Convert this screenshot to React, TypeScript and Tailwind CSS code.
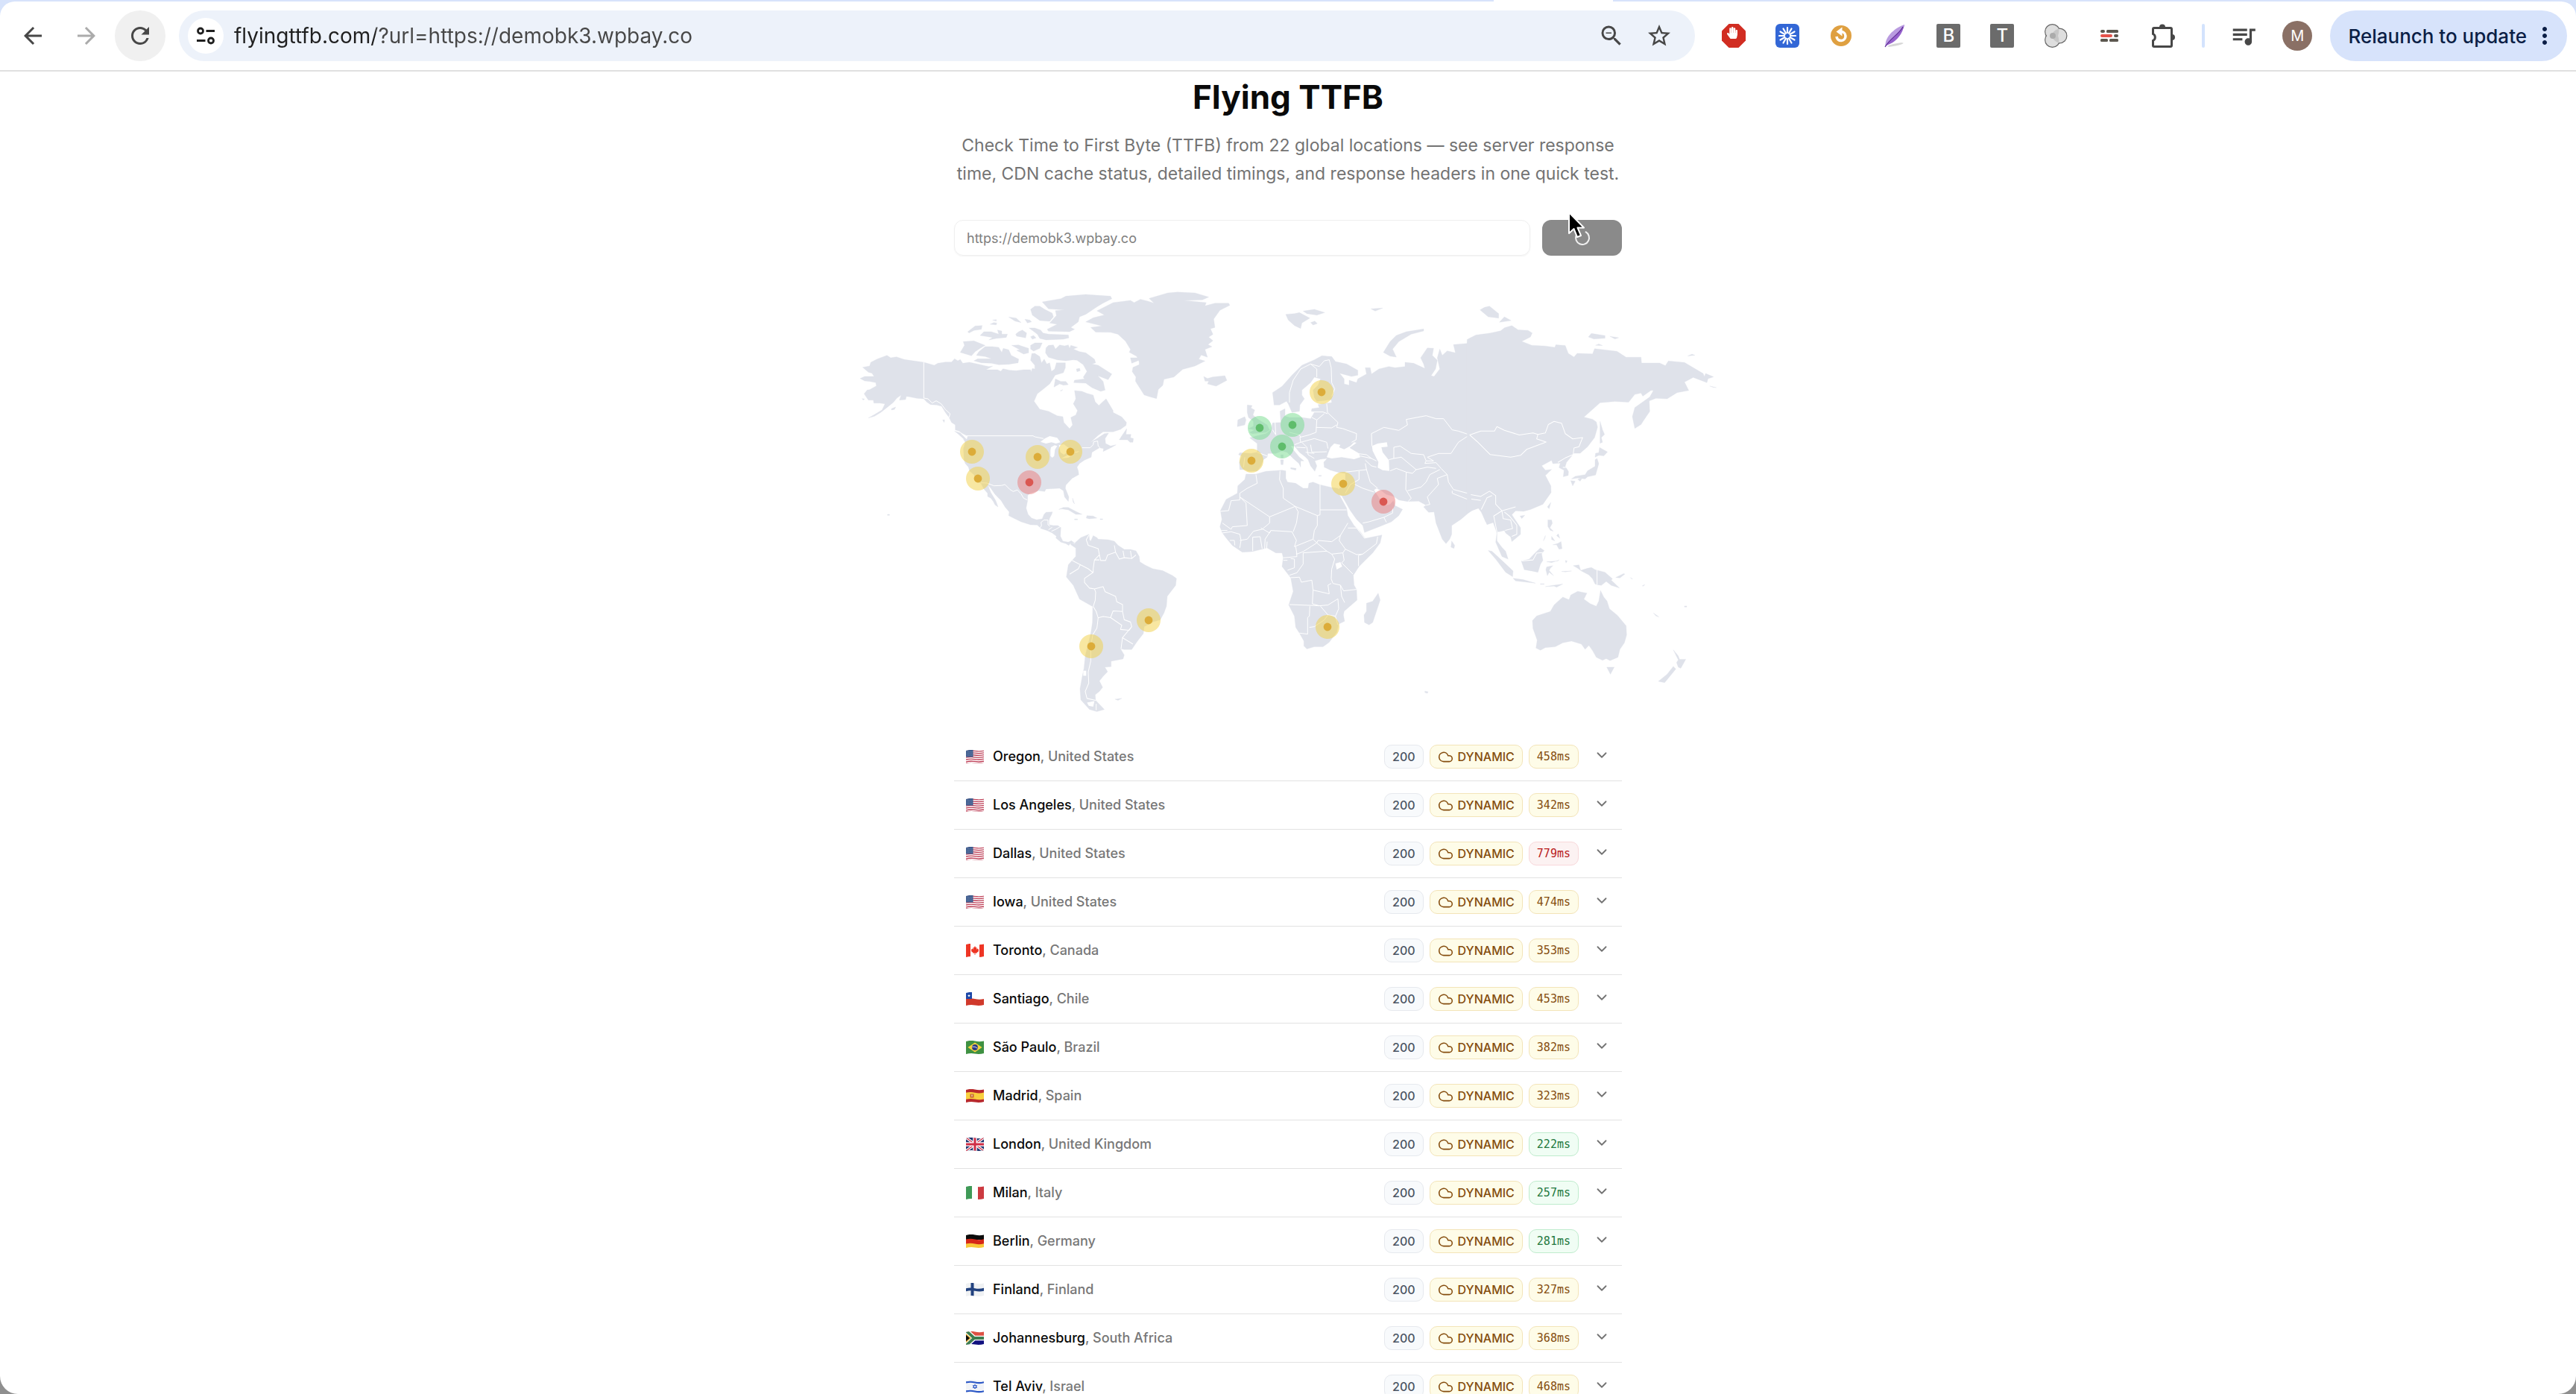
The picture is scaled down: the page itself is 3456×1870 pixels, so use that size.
import type { ReactNode } from "react";
import { ChevronDown, Cloud } from "lucide-react";
import { FaHandPaper } from "react-icons/fa";
import {
  MdArrowBack,
  MdArrowForward,
  MdMoreVert,
  MdQueueMusic,
  MdRefresh,
  MdStarBorder,
  MdZoomOut,
} from "react-icons/md";

type Speed = "good" | "ok" | "slow";

const results: {
  flag: string;
  city: string;
  country: string;
  ttfb: number;
}[] = [
  { flag: "us", city: "Oregon", country: "United States", ttfb: 458 },
  { flag: "us", city: "Los Angeles", country: "United States", ttfb: 342 },
  { flag: "us", city: "Dallas", country: "United States", ttfb: 779 },
  { flag: "us", city: "Iowa", country: "United States", ttfb: 474 },
  { flag: "ca", city: "Toronto", country: "Canada", ttfb: 353 },
  { flag: "cl", city: "Santiago", country: "Chile", ttfb: 453 },
  { flag: "br", city: "São Paulo", country: "Brazil", ttfb: 382 },
  { flag: "es", city: "Madrid", country: "Spain", ttfb: 323 },
  { flag: "gb", city: "London", country: "United Kingdom", ttfb: 222 },
  { flag: "it", city: "Milan", country: "Italy", ttfb: 257 },
  { flag: "de", city: "Berlin", country: "Germany", ttfb: 281 },
  { flag: "fi", city: "Finland", country: "Finland", ttfb: 327 },
  { flag: "za", city: "Johannesburg", country: "South Africa", ttfb: 368 },
  { flag: "il", city: "Tel Aviv", country: "Israel", ttfb: 468 },
];

const speedOf = (ttfb: number): Speed =>
  ttfb < 300 ? "good" : ttfb < 600 ? "ok" : "slow";

const badgeStyles: Record<Speed, string> = {
  good: "border-[#bfeccd] bg-[#f0fdf4] text-[#24793f]",
  ok: "border-[#f3e4b8] bg-[#fefce8] text-[#854d0e]",
  slow: "border-[#f8d8da] bg-[#fcf2f2] text-[#b91c1c]",
};

const markerColors: Record<Speed, { ring: string; dot: string }> = {
  good: { ring: "#73db8b", dot: "#5fbd6b" },
  ok: { ring: "#f1cf43", dot: "#dcac39" },
  slow: { ring: "#e97979", dot: "#da5751" },
};

const markers: { x: number; y: number; speed: Speed }[] = [
  { x: 1304, y: 606, speed: "ok" },
  { x: 1312, y: 642, speed: "ok" },
  { x: 1381, y: 647, speed: "slow" },
  { x: 1392, y: 613, speed: "ok" },
  { x: 1436, y: 606, speed: "ok" },
  { x: 1464, y: 867, speed: "ok" },
  { x: 1541, y: 832, speed: "ok" },
  { x: 1679, y: 618, speed: "ok" },
  { x: 1690, y: 574, speed: "good" },
  { x: 1720, y: 599, speed: "good" },
  { x: 1734, y: 570, speed: "good" },
  { x: 1773, y: 526, speed: "ok" },
  { x: 1781, y: 841, speed: "ok" },
  { x: 1802, y: 649, speed: "ok" },
  { x: 1856, y: 673, speed: "slow" },
];

// Each part of the world has its own grid, placed by its transform.
const regions: {
  name: string;
  transform: string;
  land: string[];
  water: string;
  borders: string;
}[] = [
  {
    name: "north-america",
    transform: "translate(1140 380) scale(0.3333)",
    land: [
      "M298,318 L340,330 355,322 385,317 410,317 422,304 435,312 445,307 455,322 482,318 520,326 545,332 560,335 575,334 548,348 595,348 608,354 617,344 645,350 670,352 700,348 728,348 730,357 735,343 745,345 745,330 738,322 728,310 733,283 745,282 765,295 772,320 783,305 793,325 805,320 812,355 825,345 832,320 868,320 868,340 860,360 827,370 805,405 780,425 755,445 742,475 765,507 800,515 835,533 858,537 862,560 885,585 897,570 890,540 910,530 917,512 900,485 910,465 905,432 935,435 955,443 980,450 988,477 1003,492 1015,480 1032,465 1060,512 1060,520 1095,538 1114,560 1112,572 1090,588 1060,598 1020,598 1000,612 970,640 1000,622 1025,605 1042,603 1028,625 1030,645 1050,655 1072,650 1055,660 1020,677 1022,665 1005,662 975,680 972,700 945,712 925,725 915,740 920,755 922,770 895,785 870,812 868,825 882,860 880,878 865,860 860,835 845,825 790,828 785,838 760,835 725,845 716,855 716,875 710,905 718,930 732,945 752,952 775,948 782,930 790,922 816,920 813,930 805,945 802,955 802,972 820,975 838,975 850,983 848,1018 858,1038 880,1042 892,1036 906,1046 890,1044 882,1055 870,1048 850,1042 830,1025 832,1018 815,1005 795,995 770,987 755,973 728,972 690,960 655,943 640,935 642,920 625,900 610,875 585,850 568,825 556,812 568,842 588,875 597,900 585,892 578,878 568,865 555,858 555,845 540,828 528,805 516,800 500,770 482,755 478,740 465,725 460,710 458,665 465,640 458,628 472,628 475,615 455,605 440,595 425,590 425,570 410,560 400,540 385,520 370,495 350,490 325,488 310,478 298,465 270,463 240,457 228,455 225,468 200,470 207,450 190,462 175,480 150,500 125,520 100,535 75,542 100,528 130,510 142,485 120,482 97,482 95,470 75,470 58,445 70,430 80,428 107,413 105,400 82,395 60,393 42,383 60,375 98,375 90,362 75,358 52,338 80,333 85,318 110,305 150,290 165,300 188,296 220,307Z",
      "M1115,585 L1098,610 1085,630 1118,630 1128,640 1140,640 1142,625 1130,622 1132,608 1112,608Z",
      "M422,595 L445,602 470,628 460,628 435,605Z M374,550 L382,550 380,560Z M168,505 L185,498 180,508 168,510Z M50,464 L60,466 54,470Z M152,930 h8 v4 h-8Z",
      "M457,235 L500,232 545,250 525,262 505,275 490,292 478,288 445,278 462,250Z",
      "M545,255 L575,255 600,258 612,278 618,262 640,268 650,290 680,305 678,320 640,326 600,328 570,322 530,320 500,312 515,304 572,304 545,295 510,290 520,275Z",
      "M525,210 L540,195 570,195 600,205 595,188 612,192 612,205 635,205 630,218 590,222 560,228 575,218Z M475,195 L505,172 533,170 530,185 500,190 480,200Z",
      "M565,165 L580,158 592,160 590,167Z M575,148 L590,146 590,152Z M640,136 L670,140 690,158 665,152Z M705,145 L725,148 732,155 715,160Z",
      "M668,205 L680,195 695,188 712,200 708,220 685,215 672,213Z M728,215 L740,210 750,220 735,225Z M722,180 L745,180 768,188 778,200 800,205 880,208 882,220 860,225 790,228 765,222 755,205Z",
      "M728,250 L745,240 775,240 765,262 740,273 728,265Z M652,250 L680,248 690,252 720,262 720,280 700,285 672,270 685,268Z",
      "M775,75 L850,62 870,52 950,45 1050,52 1055,62 1030,75 1000,90 1015,82 980,105 950,125 925,135 920,155 890,178 905,185 885,195 800,193 795,185 835,165 805,160 832,130 828,110 865,107 800,103Z",
      "M728,105 L745,92 765,92 785,105 815,120 820,135 805,153 765,150 735,128Z",
      "M790,260 L800,250 820,248 828,265 845,248 865,252 880,248 885,262 890,250 917,258 900,265 925,275 950,280 985,305 990,320 975,325 1000,330 1055,365 1040,388 998,372 1020,395 1028,430 1010,435 975,420 950,402 902,400 905,390 945,385 940,378 955,355 940,328 915,310 900,308 870,312 835,308 800,298 788,280Z",
      "M828,385 L850,395 870,395 880,408 860,410 845,405 822,418Z M848,432 L858,428 850,434Z M912,345 L925,342 928,352 915,356Z",
      "M842,910 L860,902 880,902 910,918 935,930 910,930 880,912 855,908Z M955,935 L980,937 995,945 965,948 952,945Z M905,949 h12 v3 h-12Z M1008,948 h10 v3 h-10Z M897,865 L905,888 899,880Z",
    ],
    water:
      "M768,638 L785,625 805,615 835,622 848,640 830,645 812,640 790,645Z M810,660 L825,652 835,655 826,670 823,695 815,702 808,695 808,672Z M842,652 L862,648 885,665 875,680 862,690 848,680Z M850,705 L885,688 900,690 880,702Z M898,680 L925,675 915,682Z",
    borders:
      "M298,318 V462 L315,465 332,482 348,473 368,485 385,508 404,525 400,540 M470,614 H738 L745,618 780,625 M935,662 L968,662 980,650 982,638 998,635 1000,655 1008,662 M528,803 L552,804 580,815 610,814 625,810 645,830 658,838 675,832 690,848 700,865 715,872 M766,985 L772,975 770,962 782,953 798,953 798,972 806,978 M800,992 L815,982 M812,998 L830,990 850,978",
  },
  {
    name: "south-america-greenland",
    transform: "translate(1400 380) scale(0.3333 0.37)",
    land: [
      "M170,140 L200,125 245,115 215,100 280,70 350,62 365,70 390,58 420,65 445,72 425,55 500,35 540,32 610,35 665,50 640,60 565,62 655,70 650,82 690,72 745,72 750,80 710,98 685,130 690,160 672,165 682,185 665,195 682,208 662,222 678,230 650,240 660,268 635,260 625,275 650,282 610,300 560,312 525,340 485,348 480,370 462,385 455,418 430,412 405,405 370,355 372,340 357,320 360,305 385,295 385,285 375,265 345,250 350,240 330,210 300,185 270,178 210,177 190,160 235,155Z",
      "M350,270 L380,270 382,280 355,290Z M645,338 L660,345 680,340 730,335 738,352 695,373 660,365 665,355 650,355Z",
      "M128,940 L150,922 183,910 185,930 190,935 200,915 215,922 220,928 260,930 285,935 300,950 325,965 350,965 372,970 385,990 388,1010 410,1022 440,1035 480,1042 520,1060 535,1070 532,1095 498,1135 495,1170 485,1195 470,1220 440,1228 405,1245 402,1270 380,1295 355,1328 325,1328 310,1325 325,1348 320,1362 272,1370 272,1390 247,1392 258,1408 240,1425 225,1442 238,1465 225,1480 208,1492 210,1512 245,1545 215,1553 185,1545 160,1520 150,1510 147,1470 155,1430 163,1395 168,1350 190,1270 197,1230 198,1172 145,1145 120,1095 92,1065 100,1020 130,990 130,960 110,948 108,938 125,945Z",
      "M288,1508 L315,1505 300,1512Z",
    ],
    water: "M175,1520 L205,1515 200,1535 182,1532Z M160,1405 h12 v18 h-12Z",
    borders:
      "M183,912 L172,930 180,950 220,962 225,985 205,1003 200,1035 200,1048 165,1070 165,1085 185,1105 205,1108 210,1120 208,1150 200,1172 M115,1005 L148,1020 140,1035 105,1055 M148,1020 L180,1035 198,1048 M225,985 L230,1005 250,1005 258,985 290,975 285,950 M290,975 L305,1000 325,995 320,970 M325,995 L355,998 350,970 M355,998 L372,985 M205,1003 L225,1003 M205,1108 L240,1100 248,1118 290,1135 295,1155 318,1165 318,1190 M200,1172 L212,1190 220,1213 240,1208 270,1212 280,1188 318,1190 325,1220 350,1228 355,1245 345,1258 310,1255 315,1240 270,1212 M220,1213 L215,1250 198,1275 190,1320 190,1370 180,1410 182,1450 168,1480 175,1505 210,1512 M212,1525 V1548 M355,1245 L318,1285 360,1308 M318,1285 L312,1325",
  },
  {
    name: "europe-africa",
    transform: "translate(1620 380) scale(0.3333)",
    land: [
      "M262,440 L300,415 340,370 380,330 430,308 460,292 500,295 515,315 560,325 605,350 605,370 580,375 532,362 550,385 550,405 570,410 570,390 600,400 605,385 640,365 635,340 655,340 660,365 690,345 730,335 755,340 795,335 795,318 830,322 875,343 870,325 858,300 885,260 910,262 905,290 925,310 918,345 900,372 912,375 935,345 925,300 935,265 945,290 965,272 998,280 990,247 1045,242 1050,225 1080,210 1120,205 V960 L1103,915 1095,885 1090,905 1065,915 1050,925 1020,950 983,975 983,1010 975,1030 960,1048 945,1030 920,965 912,920 890,922 870,900 880,893 850,877 805,878 770,872 750,858 720,850 700,835 680,825 670,832 685,855 700,880 715,895 735,890 748,875 755,895 785,910 770,935 740,960 690,980 632,1003 625,975 600,950 575,915 555,880 540,855 530,850 525,830 545,815 555,790 555,765 530,762 495,752 470,740 468,720 482,705 455,708 432,715 440,735 432,757 415,735 405,710 395,700 370,680 350,655 335,655 345,670 370,700 388,715 375,715 375,740 368,725 345,705 320,680 300,675 275,685 243,685 240,700 225,710 215,735 200,755 165,757 150,750 130,750 128,720 138,695 125,690 130,682 175,685 200,680 200,645 170,622 195,615 235,605 255,590 262,562 295,560 292,515 312,505 312,535 330,540 380,540 415,545 430,520 418,515 420,505 450,500 445,488 500,480 498,468 470,472 440,475 430,460 425,430 445,410 455,385 430,378 415,400 380,430 380,450 390,465 372,490 370,515 340,520 325,485 318,475 290,490 268,490Z",
      "M155,768 L195,768 235,757 300,752 315,755 315,785 322,800 355,805 385,825 405,825 408,805 425,800 450,810 500,822 525,825 530,850 560,905 565,935 590,975 615,1000 635,1027 702,1013 695,1045 665,1085 610,1140 587,1175 590,1215 600,1232 602,1275 550,1320 547,1335 552,1360 528,1372 520,1405 490,1445 465,1463 430,1463 400,1472 388,1460 388,1440 370,1408 355,1385 350,1340 327,1295 345,1240 335,1185 300,1140 305,1105 300,1085 275,1085 240,1065 200,1075 180,1080 140,1082 100,1055 75,1025 60,1005 50,980 58,950 52,915 75,870 120,845 122,815 150,790Z",
      "M160,490 L180,492 175,502 190,510 183,530 200,545 240,570 250,590 235,600 180,605 170,600 190,590 165,585 185,575 185,555 165,540 160,520Z M122,550 L150,537 155,550 150,570 120,577Z",
      "M295,690 h10 v13 h-9Z M294,710 L306,710 304,730 296,730Z M335,742 L357,745 355,752 335,747Z M448,773 h10 v3 h-10Z",
      "M315,125 L350,122 370,118 412,140 380,160 375,182 350,170 325,148Z M385,112 L430,105 472,118 440,128 400,122Z M415,158 L432,152 442,162 425,168Z M658,103 L705,100 675,112Z",
      "M870,184 L870,192 820,205 770,235 745,265 760,297 735,293 708,278 735,235 760,210 800,195Z M1097,107 L1115,97 1135,92 1172,122 1172,140 1130,135Z M1175,157 L1195,135 1222,150Z",
      "M687,1247 L695,1275 665,1365 650,1375 632,1365 630,1335 640,1320 640,1288 665,1280Z M983,1037 L995,1055 992,1067 980,1062Z",
    ],
    water:
      "M480,700 L495,660 510,645 535,650 530,660 550,668 575,655 590,640 600,642 572,662 610,685 615,700 590,708 540,700 500,705Z M662,655 L685,645 722,640 725,658 700,660 705,680 730,712 732,755 705,752 685,742 688,720 665,675Z M515,1128 L535,1122 542,1140 520,1152Z",
    borders:
      "M195,770 L200,805 160,825 130,845 130,860 250,940 353,898 305,865 305,825 290,790 292,755 M52,918 L85,915 95,875 130,872 130,860 M130,860 L155,885 160,975 100,980 M250,940 L250,965 220,990 185,998 160,1030 M353,898 L442,935 V975 L430,995 425,1030 350,1060 358,1035 345,1010 340,1000 255,995 250,1005 215,985 M453,810 V912 H560 M453,912 V932 L442,935 M353,898 L365,920 358,965 345,1000 M100,980 L95,990 60,965 M55,995 H80 M60,1005 L95,1000 130,1010 135,1035 130,1065 M160,1030 L130,1035 M90,1035 L108,1035 110,1055 M182,1022 V1078 M182,1022 L212,1020 220,1068 M230,1068 L232,1030 255,995 M238,1068 L240,1040 M425,1030 L440,1045 385,1080 360,1090 355,1060 M305,1105 L360,1100 358,1085 M305,1115 H322 M440,1045 L445,1035 500,1040 535,1015 530,1035 555,1070 600,1092 625,1090 680,1048 685,1020 M565,965 L535,1015 M565,985 L600,985 620,1010 633,1027 M440,1045 L480,1078 385,1085 M480,1078 L500,1090 545,1085 555,1070 M545,1085 L550,1115 540,1125 585,1170 M625,1090 L608,1095 608,1138 M500,1090 L512,1110 500,1150 498,1190 505,1208 535,1215 548,1238 600,1232 M385,1085 L385,1130 360,1165 330,1175 M322,1155 L350,1145 350,1110 335,1108 M335,1185 L370,1183 378,1203 420,1195 425,1235 490,1250 485,1215 498,1208 M425,1235 L422,1290 450,1298 330,1293 M450,1298 L485,1295 525,1270 M535,1215 L540,1260 552,1285 M525,1270 L528,1310 515,1340 485,1335 455,1300 M412,1300 L410,1340 403,1345 403,1412 370,1408 M410,1385 L430,1382 470,1355 485,1335 M515,1340 L525,1375 M330,480 L330,440 345,390 375,345 415,325 440,345 440,378 M415,325 L450,335 470,312 490,308 498,340 500,400 512,425 500,455 M480,485 L483,520 525,560 520,580 545,585 600,605 598,630 580,640 M440,550 L437,600 410,610 372,620 M437,580 L500,582 520,570 M418,518 L465,518 483,525 M420,540 L440,550 470,525 M372,620 L375,640 430,625 480,640 485,665 M375,640 L350,650 M380,640 L400,660 405,690 430,705 M358,660 L395,662 M415,650 L420,680 480,678 M395,680 L430,685 M330,600 L370,610 375,620 M262,590 L275,610 272,560 M200,680 L240,695 M150,700 L145,740 M555,760 L640,750 635,725 M615,695 L660,705 680,715 M600,685 L640,690 660,705 M640,750 L655,800 685,825 M635,712 L660,735 680,740 M610,755 L610,790 575,810 555,845 M590,808 L625,825 670,840 M625,965 L650,960 710,942 745,925 745,905 M710,942 L720,962 M735,755 L760,745 800,760 798,830 820,865 808,878 M730,710 L750,705 V660 L775,655 820,685 870,690 M662,655 L660,605 710,580 770,592 805,570 800,548 880,533 920,545 950,545 985,590 1010,595 1055,610 M750,705 L780,700 840,750 825,765 800,760 M870,690 L880,715 910,715 885,700 930,685 980,685 M840,750 L885,740 920,745 M935,750 L895,770 880,800 860,820 805,835 M880,715 L875,725 920,722 940,745 965,770 970,800 990,830 1065,850 1100,860 1115,855 M965,770 L925,785 930,810 885,860 895,890 880,893 M985,835 L985,845 1060,875 1065,850 M1065,865 L1070,880 1065,905 M1065,868 L1098,870 M980,685 L1010,640 1055,610",
  },
  {
    name: "asia-oceania",
    transform: "translate(1900 380) scale(0.3333 0.3508)",
    land: [
      "M205,215 L240,198 300,190 340,182 355,170 385,162 410,178 450,180 467,190 460,205 425,222 465,237 520,240 558,245 562,235 600,238 612,268 635,282 648,268 710,270 718,250 808,260 845,283 905,283 907,305 980,305 1003,315 1015,297 1080,303 1155,345 1160,357 1165,345 1197,358 1175,365 1170,380 1115,360 1080,378 1097,410 1050,418 1010,442 965,440 938,450 940,490 915,525 905,540 880,555 870,510 880,475 940,435 955,410 945,410 912,432 905,420 880,425 855,455 800,452 740,457 675,512 710,520 725,530 730,550 718,590 690,625 660,650 635,650 605,685 600,700 613,720 612,735 592,740 595,715 575,705 580,688 550,690 545,677 505,698 520,715 545,712 520,735 542,775 543,800 510,845 460,865 432,872 400,870 385,885 420,935 420,960 385,988 380,970 360,955 355,945 335,950 325,950 325,985 345,1010 360,1025 370,1055 345,1045 320,990 325,955 310,915 285,923 262,875 250,860 220,868 205,880Z",
      "M418,890 L437,887 425,900Z M542,838 L535,862 528,855Z M740,528 L750,560 758,578 745,590 750,608 740,612 740,560Z M738,628 L770,645 755,660 735,658 720,665 722,650 735,648Z M728,670 L735,690 722,733 690,740 680,748 650,745 625,748 640,738 680,732 690,717 720,700 720,675Z M622,755 L640,757 630,775Z M650,750 L668,745 660,757Z",
      "M530,905 L545,905 548,918 538,935 552,948 540,945 530,930Z M572,958 L578,975 565,965Z M550,1000 L570,995 583,988 587,1015 575,1017 565,1000Z M545,968 L558,985 545,980Z M520,965 L512,985 518,975Z",
      "M290,1022 L305,1025 345,1060 390,1100 388,1122 360,1105 320,1055Z M390,1128 L430,1133 480,1147 400,1138Z M500,1149 h15 v2 h-15Z M520,1160 L550,1155 590,1150 565,1162 555,1158Z",
      "M423,1062 L455,1055 480,1030 500,1012 515,1022 505,1035 510,1060 500,1075 490,1105 465,1100 435,1095Z M525,1085 L550,1080 540,1090 535,1098 553,1118 535,1105 528,1118 522,1095Z M525,1065 L570,1062 575,1058 545,1068Z M600,1060 L608,1062 603,1070Z M585,1102 L625,1100 600,1104Z",
      "M632,1080 L655,1077 662,1098 690,1090 705,1087 720,1095 760,1105 790,1130 785,1135 818,1165 785,1155 765,1140 745,1155 730,1153 720,1150 710,1130 695,1115 665,1100 650,1090Z M803,1125 L835,1110 840,1112 820,1127Z M862,1125 L871,1130 868,1131Z M910,1157 L920,1152 915,1158Z",
      "M468,1290 L485,1272 540,1255 555,1230 590,1200 615,1210 622,1192 650,1178 687,1185 675,1208 700,1225 725,1235 735,1215 742,1175 755,1200 768,1215 778,1245 810,1270 845,1310 847,1345 838,1375 820,1400 812,1430 780,1443 765,1435 750,1442 725,1430 710,1405 695,1385 680,1400 665,1380 625,1368 590,1375 560,1390 520,1393 500,1403 482,1395 487,1365 470,1320Z M767,1468 L797,1468 782,1495Z",
      "M1035,1402 L1055,1425 1060,1438 1085,1438 1065,1472 1055,1468 1048,1450 1055,1440Z M1035,1465 L1045,1475 1000,1527 975,1522 1010,1495Z M955,1261 L977,1276 965,1272Z M1080,1234 h9 v4 h-9Z",
      "M693,205 L705,192 760,200 760,210 715,213Z M780,203 L815,208 800,213Z M722,237 L735,232 750,238Z M1093,278 L1110,271 1122,275Z M1182,393 L1208,399 1195,398Z M35,1560 L48,1562 45,1568 35,1565Z",
    ],
    water: "",
    borders:
      "M215,580 L260,565 315,565 325,548 355,562 415,580 470,572 490,578 485,595 523,607 445,635 420,658 380,665 298,655 245,605 215,580 M490,578 L520,572 532,540 555,528 585,535 600,575 630,595 670,590 655,625 635,630 632,655 600,668 570,685 M590,704 H608 M220,808 L260,815 295,795 320,812 320,845 345,870 400,855 M345,870 L312,890 325,950 M345,870 L350,900 380,905 388,938 358,945 M355,875 L375,890 405,925 405,960 385,968 M262,865 L285,820 305,812 M222,825 L260,830 M425,1062 L470,1058 485,1032 510,1030 M728,1095 V1153",
  },
];

const WorldMap = () => (
  <svg
    viewBox="1152 375 1152 600"
    className="mt-8 w-full max-w-[1152px] shrink-0"
    role="img"
    aria-label="World map of test locations"
  >
    {regions.map((region) => (
      <g key={region.name} transform={region.transform}>
        {region.land.map((d, i) => (
          <path
            key={i}
            d={d}
            fill="#dfe2ea"
            stroke="#dfe2ea"
            strokeWidth="1"
            strokeLinejoin="round"
          />
        ))}
        {region.water && <path d={region.water} fill="#fff" />}
        <path
          d={region.borders}
          fill="none"
          stroke="#fff"
          strokeWidth="3"
          strokeLinejoin="round"
        />
      </g>
    ))}
    {markers.map(({ x, y, speed }) => (
      <g key={`${x}-${y}`}>
        <circle
          cx={x}
          cy={y}
          r="16"
          fill={markerColors[speed].ring}
          opacity="0.5"
        />
        <circle cx={x} cy={y} r="5.4" fill={markerColors[speed].dot} />
      </g>
    ))}
  </svg>
);

const flags: Record<string, ReactNode> = {
  us: (
    <>
      <path fill="#fff" d="M0 0h24v18H0z" />
      <path
        stroke="#bd3d55"
        strokeWidth="1.3"
        fill="none"
        d="M0 1.8Q6 .4 12 1.4T24 1M0 4.6Q6 3.2 12 4.2T24 3.8M0 7.4Q6 6 12 7T24 6.6M0 10.2Q6 8.8 12 9.8T24 9.4M0 13Q6 11.6 12 12.6T24 12.2M0 15.8Q6 14.4 12 15.4T24 15M0 18Q6 16.8 12 17.8T24 17.4"
      />
      <path fill="#3c5a8c" d="M0 0h9.5v9.5H0z" />
      <path
        stroke="#9db0cf"
        strokeWidth=".7"
        strokeDasharray=".8 1.1"
        d="M1 2.4h8M1.6 4.2h7M1 6h8M1.6 7.8h7"
      />
    </>
  ),
  ca: (
    <>
      <path fill="#fff" d="M0 0h24v18H0z" />
      <path fill="#ee3524" d="M0 0h6v18H0zM18 0h6v18h-6z" />
      <path
        fill="#ee3524"
        d="M12 3l1.2 2.2 1.3-.5-.4 3 1.6-1.4.5 1.2 1-.1-.6 1.9.5.6-2.7 2 .2.8-2.2-.2V15h-.8v-2.5l-2.2.2.2-.8-2.7-2 .5-.6-.6-1.9 1 .1.5-1.2L9.9 7.7l-.4-3 1.3.5z"
      />
    </>
  ),
  cl: (
    <>
      <path fill="#fff" d="M0 0h24v9H0z" />
      <path fill="#d0392b" d="M0 9q6-1.5 12 0t12 0v9H0z" />
      <path fill="#1d48a8" d="M0 0h8v9H0z" />
      <path
        fill="#fff"
        d="M4 2.6l.5 1.4H6l-1.2.9.5 1.5L4 5.5l-1.3.9.5-1.5L2 4h1.5z"
      />
    </>
  ),
  br: (
    <>
      <path fill="#3f9142" d="M0 0h24v18H0z" />
      <path fill="#f7d13d" d="M12 2.5L21.5 9 12 15.5 2.5 9z" />
      <circle cx="12" cy="9" r="3.9" fill="#2b3a86" />
      <path stroke="#fff" strokeWidth=".8" fill="none" d="M8.3 8.2q4-.8 7 2" />
    </>
  ),
  es: (
    <>
      <path fill="#b8292c" d="M0 0h24v18H0z" />
      <path fill="#f8cf3e" d="M0 4.8q6-1.5 12 0t12-.3v9q-6 1.3-12 0t-12 .3z" />
      <path fill="#b8412f" d="M5.5 6.5h5v5h-5z" opacity=".75" />
      <path fill="#e8b48a" d="M7 7.5h2V10H7z" />
    </>
  ),
  gb: (
    <>
      <path fill="#22356f" d="M0 0h24v18H0z" />
      <path stroke="#fff" strokeWidth="3.6" d="M0 0l24 18M24 0L0 18" />
      <path stroke="#cf2c45" strokeWidth="1.2" d="M0 0l24 18M24 0L0 18" />
      <path stroke="#fff" strokeWidth="5.5" d="M12 0v18M0 9h24" />
      <path stroke="#cf2c45" strokeWidth="3" d="M12 0v18M0 9h24" />
    </>
  ),
  it: (
    <>
      <path fill="#fff" d="M0 0h24v18H0z" />
      <path fill="#3f9a57" d="M0 0h8v18H0z" />
      <path fill="#cc3a40" d="M16 0h8v18h-8z" />
    </>
  ),
  de: (
    <>
      <path fill="#0c0c0c" d="M0 0h24v7H0z" />
      <path fill="#d62718" d="M0 6.6q6-1.5 12 0t12-.4v9H0z" />
      <path fill="#f9c83a" d="M0 12.6q6-1.5 12 0t12-.4v6H0z" />
    </>
  ),
  fi: (
    <>
      <path fill="#eff1f3" d="M0 0h24v18H0z" />
      <path fill="#22427f" d="M6.5 0h4v18h-4z" />
      <path fill="#22427f" d="M0 7.2q6-1.5 12 0t12-.4v4q-6 1.3-12 0t-12 .4z" />
    </>
  ),
  za: (
    <>
      <path fill="#dd5143" d="M0 0h24v9H0z" />
      <path fill="#11117f" d="M0 9h24v9H0z" />
      <path stroke="#fff" strokeWidth="6.5" fill="none" d="M0-1l11 10L0 19M10 9h14" />
      <path stroke="#3d7d4f" strokeWidth="3.8" fill="none" d="M0-1l11 10L0 19M10 9h14" />
      <path fill="#f2b83c" d="M0 3l7 6-7 6z" />
      <path fill="#0c0c0c" d="M0 4.8L5 9l-5 4.2z" />
    </>
  ),
  il: (
    <>
      <path fill="#f1f3f7" d="M0 0h24v18H0z" />
      <path
        stroke="#2a56c6"
        strokeWidth="2.2"
        fill="none"
        d="M0 3.5q6-1.5 12 0t12-.3M0 15.5q6-1.5 12 0t12-.3"
      />
      <path
        stroke="#2a56c6"
        strokeWidth=".9"
        fill="none"
        d="M12 6.2l2.6 4.4H9.4zM12 12l2.6-4.4H9.4z"
      />
    </>
  ),
};

const Flag = ({ code }: { code: string }) => (
  <svg viewBox="0 0 24 18" className="h-[18px] w-6 shrink-0" aria-hidden="true">
    <g clipPath="url(#flag-wave)">{flags[code]}</g>
  </svg>
);

const ResultRow = ({
  flag,
  city,
  country,
  ttfb,
}: {
  flag: string;
  city: string;
  country: string;
  ttfb: number;
}) => (
  <li className="border-b border-[#e2e2e2]">
    <button className="flex h-16 w-full items-center px-4 text-left text-lg">
      <Flag code={flag} />
      <span className="ml-3 flex-1 font-medium text-[#777777]">
        <span className="text-[#0a0a0a]">{city}</span>, {country}
      </span>
      <span className="flex items-center gap-2 text-base">
        <span className="flex h-8 items-center rounded-[10px] border border-[#e6e9ee] bg-[#f8fafc] px-2.5 font-medium text-[#4b5563]">
          200
        </span>
        <span className="flex h-8 items-center gap-1.5 rounded-[10px] border border-[#f3e4b8] bg-[#fefce8] px-2.5 font-medium text-[#854d0e]">
          <Cloud size={21} strokeWidth={1.8} />
          DYNAMIC
        </span>
        <span
          className={`flex h-8 items-center rounded-[10px] border px-2.5 font-['DejaVu_Sans_Mono',monospace] text-[15px] ${badgeStyles[speedOf(ttfb)]}`}
        >
          {ttfb}ms
        </span>
      </span>
      <ChevronDown size={22} className="mb-1 ml-5 text-[#737373]" />
    </button>
  </li>
);

const ToolbarButton = ({
  label,
  children,
}: {
  label: string;
  children: ReactNode;
}) => (
  <button
    aria-label={label}
    className="flex h-[68px] w-[72px] shrink-0 items-center justify-center text-[#474747]"
  >
    {children}
  </button>
);

const LetterTile = ({ letter }: { letter: string }) => (
  <span className="flex size-8 items-center justify-center rounded-xs bg-[#6b6b6b] text-2xl font-medium text-white">
    {letter}
  </span>
);

const Extensions = () => (
  <>
    <ToolbarButton label="Ad blocker">
      <svg viewBox="0 0 32 32" className="size-8">
        <path fill="#d12d22" d="M9.5 0h13L32 9.5v13L22.5 32h-13L0 22.5v-13z" />
        <FaHandPaper x="6" y="4" width="20" height="24" color="#fff" />
      </svg>
    </ToolbarButton>
    <ToolbarButton label="Starburst">
      <svg viewBox="0 0 32 32" className="size-8">
        <rect width="32" height="32" rx="6" fill="#3367d6" />
        <path
          d="M16 5v7M16 20v7M5 16h7M20 16h7M10.5 6.5l3.5 6M18 19.500l3.5 6M6.5 10.5l6 3.5M19.5 18l6 3.5M21.5 6.5l-3.5 6M14 19.500l-3.5 6M25.5 10.5l-6 3.5M12.5 18l-6 3.5"
          stroke="#fff"
          strokeWidth="2.2"
          strokeLinecap="round"
        />
      </svg>
    </ToolbarButton>
    <ToolbarButton label="Reload cache">
      <svg viewBox="0 0 28 28" className="size-7">
        <circle cx="14" cy="14" r="14" fill="#dfa041" />
        <path
          d="M11 8.5H14a6 6 0 1 1-6 6.500"
          fill="none"
          stroke="#fff"
          strokeWidth="3.6"
        />
        <path d="M7.500 8.500l8-6v12z" fill="#fff" />
      </svg>
    </ToolbarButton>
    <ToolbarButton label="Feather">
      <svg viewBox="0 0 28 32" className="h-8 w-7">
        <ellipse
          cx="15"
          cy="28"
          rx="11"
          ry="1.6"
          fill="#d6d6d6"
          transform="rotate(-12 15 28)"
        />
        <path d="M27 1C16 5 5 13 2 24l-1 6c6-4 10-4 14-8C22 16 25 9 27 1z" fill="#b99be0" />
        <path d="M27 1C22 12 12 18 1 30c5-3 10-4 14-8C22 16 25 9 27 1z" fill="#9560cc" />
        <path d="M25 4C19 15 9 18 1 31" stroke="#5d2a94" strokeWidth="1.2" fill="none" />
      </svg>
    </ToolbarButton>
    <ToolbarButton label="Extension B">
      <LetterTile letter="B" />
    </ToolbarButton>
    <ToolbarButton label="Extension T">
      <LetterTile letter="T" />
    </ToolbarButton>
    <ToolbarButton label="Circles">
      <svg viewBox="0 0 32 32" className="size-8">
        <g fill="#666">
          <circle cx="11.5" cy="10.5" r="10.5" />
          <circle cx="11.5" cy="21.5" r="10.5" />
          <circle cx="21" cy="16" r="10.5" />
        </g>
        <g fill="#dedede">
          <circle cx="11.5" cy="10.5" r="9.3" />
          <circle cx="11.5" cy="21.5" r="9.3" />
          <circle cx="21" cy="16" r="9.3" />
        </g>
        <path
          d="M12 12c2-3 6-5 8-5.500 1 5-1 9-1 9.500s2 5 1 9.500c-3-1-6-3-8-6z"
          fill="#c6c6c6"
        />
        <circle cx="12" cy="16" r="4" fill="#ababab" />
      </svg>
    </ToolbarButton>
    <ToolbarButton label="Bricks">
      <svg viewBox="0 0 24 16" className="h-4 w-6">
        <g fill="#5c584f">
          <rect width="6" height="4" rx="2" />
          <rect x="8" width="16" height="4" rx="1.5" />
          <rect x="18" y="6" width="6" height="4" rx="2" />
          <rect y="12" width="10" height="4" rx="1.5" />
          <rect x="12" y="12" width="12" height="4" rx="1.5" />
        </g>
        <rect y="6" width="16" height="4" rx="2" fill="#e5534b" />
      </svg>
    </ToolbarButton>
    <ToolbarButton label="Extensions">
      <svg viewBox="0 0 32 32" className="size-8">
        <path
          d="M4 5.5h22a1.500 1.500 0 0 1 1.500 1.500v22a1.500 1.500 0 0 1-1.500 1.500H4A1.500 1.500 0 0 1 2.500 29v-6.500a5 5 0 0 0 0-9V7A1.500 1.500 0 0 1 4 5.500z"
          fill="none"
          stroke="#474747"
          strokeWidth="3"
        />
        <path d="M11 4.5a4 4 0 0 1 8 0zM28 14a4 4 0 0 1 0 8z" fill="#474747" />
      </svg>
    </ToolbarButton>
  </>
);

const BrowserToolbar = () => (
  <header className="bg-[#d7e3fb]">
    <div className="h-0.5">
      <div className="ml-[58%] h-full w-40 bg-white" />
    </div>
    <div className="flex h-[94px] items-center rounded-t-[20px] border-b-2 border-[#e0e0e0] bg-white pr-3 pl-2">
      <ToolbarButton label="Back">
        <MdArrowBack size={36} />
      </ToolbarButton>
      <ToolbarButton label="Forward">
        <MdArrowForward size={36} className="text-[#ababab]" />
      </ToolbarButton>
      <ToolbarButton label="Reload">
        <span className="flex size-[68px] items-center justify-center rounded-full bg-[#f0f0f0]">
          <MdRefresh size={36} />
        </span>
      </ToolbarButton>
      <div className="ml-4 flex h-[68px] flex-1 items-center rounded-full bg-[#edf2fa] pr-4 pl-3">
        <button
          aria-label="Site information"
          className="flex size-12 items-center justify-center rounded-full bg-white"
        >
          <svg
            viewBox="0 0 24 24"
            className="size-6"
            fill="none"
            stroke="#1f1f1f"
            strokeWidth="2.8"
          >
            <circle cx="5" cy="5.5" r="3.5" />
            <path d="M12.5 5.5H24M0 18.500h11.500" />
            <circle cx="19" cy="18.5" r="3.5" />
          </svg>
        </button>
        <input
          aria-label="Address"
          className="ml-3.5 min-w-0 flex-1 bg-[linear-gradient(90deg,#1f1f1f_190px,#474747_190px)] bg-clip-text text-[28px] text-transparent outline-none"
          defaultValue="flyingttfb.com/?url=https://demobk3.wpbay.co"
        />
        <button
          aria-label="Zoom"
          className="flex h-12 w-16 items-center justify-center text-[#474747]"
        >
          <MdZoomOut size={36} />
        </button>
        <button
          aria-label="Bookmark"
          className="flex h-12 w-16 items-center justify-center text-[#474747]"
        >
          <MdStarBorder size={36} />
        </button>
      </div>
      <div className="ml-4 flex items-center">
        <Extensions />
        <div className="mx-4 h-8 w-1 rounded-full bg-[#d3e3fd]" />
        <ToolbarButton label="Media controls">
          <MdQueueMusic size={38} />
        </ToolbarButton>
        <button
          aria-label="Profile"
          className="ml-4 size-10 rounded-full bg-[#8a7065] text-xl text-white"
        >
          M
        </button>
        <button className="ml-6 flex h-[68px] items-center rounded-full bg-[#d7e3fb] pr-3 pl-6 text-[26px] font-medium text-[#0b1e46]">
          Relaunch to update
          <MdMoreVert size={36} className="ml-1.5" />
        </button>
      </div>
    </div>
  </header>
);

export default function App() {
  return (
    <div className="h-screen overflow-hidden bg-[#8f8f8f] font-['Inter',sans-serif]">
      <div className="flex h-full flex-col overflow-hidden rounded-b-[24px] bg-white">
        <svg className="absolute size-0" aria-hidden="true">
          <clipPath id="flag-wave">
            <path d="M0 1Q6-1 12 .5T24 .5V17Q18 18.500 12 17.500T0 18Z" />
          </clipPath>
        </svg>
        <BrowserToolbar />

        <main className="flex flex-1 flex-col items-center overflow-hidden pt-1">
          <h1 className="text-[44px] leading-[60px] font-bold text-[#0a0a0a]">
            Flying TTFB
          </h1>
          <p className="mt-4 max-w-[896px] text-center text-[23px] leading-[38px] text-[#737373]">
            Check Time to First Byte (TTFB) from 22 global locations — see server
            response time, CDN cache status, detailed timings, and response
            headers in one quick test.
          </p>

          <form
            className="mt-[43px] flex w-full max-w-[896px] gap-4"
            onSubmit={(e) => e.preventDefault()}
          >
            <input
              type="url"
              aria-label="Website URL"
              defaultValue="https://demobk3.wpbay.co"
              className="h-12 min-w-0 flex-1 rounded-xl border border-[#efefef] px-4 text-lg text-[#808080] shadow-xs outline-none"
            />
            <button
              aria-label="Testing"
              className="relative flex h-12 w-[107px] items-center justify-center rounded-xl bg-[#8a8a8a]"
            >
              <svg viewBox="0 0 24 24" className="size-6" fill="none">
                <path
                  d="M16.5 4.2A9 9 0 1 1 3.5 9"
                  stroke="#f1f1f1"
                  strokeWidth="2"
                  strokeLinecap="round"
                />
              </svg>
              {/* mouse pointer */}
              <svg
                viewBox="0 0 24 38"
                className="absolute -top-3 left-[34px] h-[38px] w-6"
              >
                <path
                  d="M2 2v28l6.500-6 4.500 11 5-2-4.500-10.500H22z"
                  fill="#000"
                  stroke="#fff"
                  strokeWidth="2"
                  strokeLinejoin="round"
                />
              </svg>
            </button>
          </form>

          <WorldMap />

          <ul className="mt-2 w-full max-w-[896px]">
            {results.map((result) => (
              <ResultRow key={result.city} {...result} />
            ))}
          </ul>
        </main>
      </div>
    </div>
  );
}
